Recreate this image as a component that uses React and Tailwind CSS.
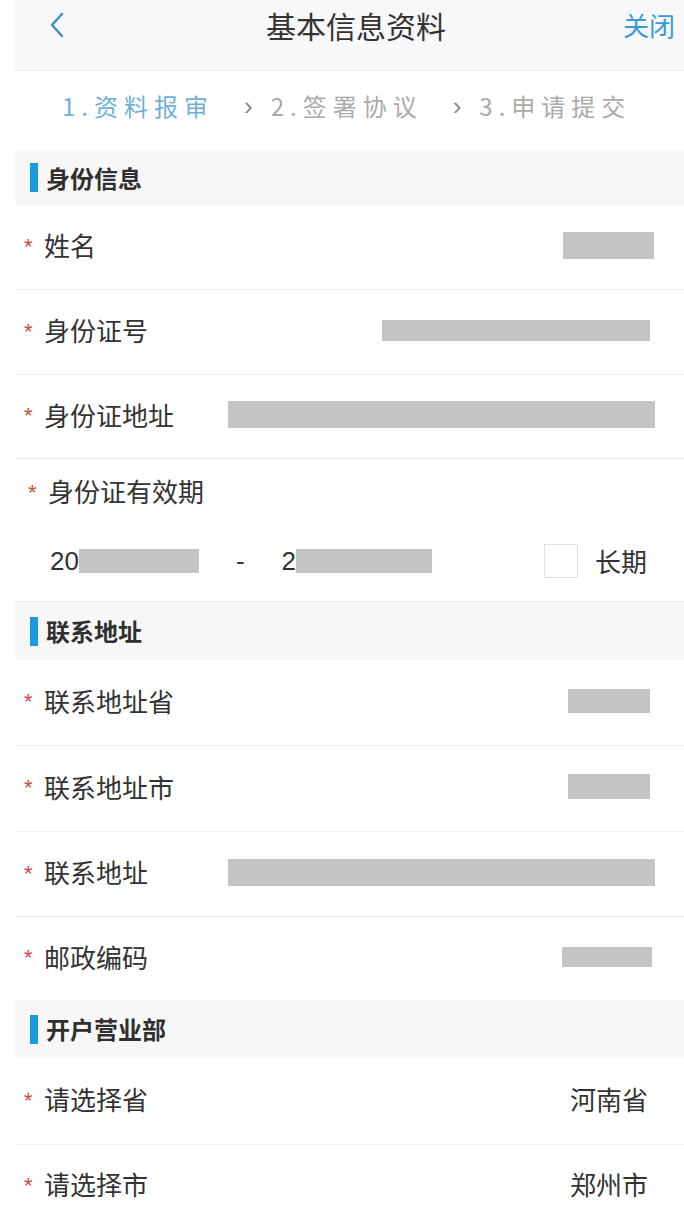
import React from "react";

const FONT = { fontFamily: '"Noto Sans CJK SC", "Noto Sans", sans-serif' };

function Star() {
  return (
    <span className="w-[20px] text-[22px] leading-none text-[#cf4a3f] mt-[3px]" style={{ fontFamily: '"Liberation Sans", sans-serif' }}>
      *
    </span>
  );
}

function Row({ label, h, children, border = true }) {
  return (
    <div className={`flex items-center pl-[9px] pb-[4px] ${border ? "border-b border-[#ececec]" : ""} ${h}`}>
      <Star />
      <span className="text-[26px] text-[#333333] leading-none">{label}</span>
      <div className="ml-auto flex items-center">{children}</div>
    </div>
  );
}

function Block({ w, h, mr }) {
  return <div className={`bg-[#c4c4c4] ${w} ${h} ${mr}`} />;
}

function Section({ title, h }) {
  return (
    <div className={`flex items-center bg-[#f7f7f7] ${h}`}>
      <div className="ml-[15px] w-[8px] h-[29px] bg-[#1a9be0]" />
      <span className="ml-[8px] text-[24px] font-bold text-[#2f2f2f] leading-none">{title}</span>
    </div>
  );
}

export default function App() {
  return (
    <div className="w-[684px] h-[1227px] bg-white overflow-hidden pl-[15px]" style={FONT}>
      {/* Header */}
      <div className="flex items-center h-[71px] pb-[20px] bg-[#f8f8f8] border-b border-[#efefef]">
        <svg className="ml-[34px]" width="16" height="26" viewBox="0 0 16 26" fill="none">
          <path d="M13 2 L3 13 L13 24" stroke="#3d8fc4" strokeWidth="2.4" strokeLinecap="round" strokeLinejoin="round" />
        </svg>
        <span className="ml-[201px] text-[30px] text-[#333333] leading-none">基本信息资料</span>
        <span className="ml-auto mr-[9px] text-[26px] text-[#3a9ad9] leading-none">关闭</span>
      </div>

      {/* Steps */}
      <div className="flex items-center h-[79px] pb-[10px] pl-[47px] text-[24px] leading-none">
        <span className="text-[#6fb0d8] tracking-[6px]">1.资料报审</span>
        <span className="ml-[30px] text-[#888888] text-[26px]" style={{ fontFamily: '"Liberation Sans", sans-serif' }}>›</span>
        <span className="ml-[18px] text-[#aaaaaa] tracking-[6px]">2.签署协议</span>
        <span className="ml-[30px] text-[#888888] text-[26px]" style={{ fontFamily: '"Liberation Sans", sans-serif' }}>›</span>
        <span className="ml-[18px] text-[#aaaaaa] tracking-[6px]">3.申请提交</span>
      </div>

      <Section title="身份信息" h="h-[55px]" />
      <Row label="姓名" h="h-[85px]">
        <Block w="w-[91px]" h="h-[27px]" mr="mr-[30px]" />
      </Row>
      <Row label="身份证号" h="h-[85px]">
        <Block w="w-[268px]" h="h-[21px]" mr="mr-[34px]" />
      </Row>
      <Row label="身份证地址" h="h-[84px]">
        <Block w="w-[427px]" h="h-[27px]" mr="mr-[29px]" />
      </Row>

      {/* Validity */}
      <div className="h-[143px] border-b border-[#ececec]">
        <div className="flex items-center h-[62px] pl-[13px] pt-[2px]">
          <Star />
          <span className="text-[26px] text-[#333333] leading-none">身份证有效期</span>
        </div>
        <div className="flex items-center h-[80px] pl-[35px]">
          <span className="text-[26px] text-[#333333] leading-none" style={{ fontFamily: '"Liberation Sans", sans-serif' }}>20</span>
          <div className="w-[120px] h-[24px] bg-[#c4c4c4]" />
          <span className="ml-[37px] text-[26px] text-[#333333] leading-none" style={{ fontFamily: '"Liberation Sans", sans-serif' }}>-</span>
          <span className="ml-[37px] text-[26px] text-[#333333] leading-none" style={{ fontFamily: '"Liberation Sans", sans-serif' }}>2</span>
          <div className="w-[136px] h-[24px] bg-[#c4c4c4]" />
          <div className="ml-auto w-[34px] h-[34px] border border-[#e2e2e2] bg-white" />
          <span className="ml-[17px] mr-[37px] text-[26px] text-[#333333] leading-none">长期</span>
        </div>
      </div>

      <Section title="联系地址" h="h-[58px]" />
      <Row label="联系地址省" h="h-[86px]">
        <Block w="w-[82px]" h="h-[24px]" mr="mr-[34px]" />
      </Row>
      <Row label="联系地址市" h="h-[86px]">
        <Block w="w-[82px]" h="h-[25px]" mr="mr-[34px]" />
      </Row>
      <Row label="联系地址" h="h-[85px]">
        <Block w="w-[427px]" h="h-[27px]" mr="mr-[29px]" />
      </Row>
      <Row label="邮政编码" h="h-[83px]" border={false}>
        <Block w="w-[90px]" h="h-[20px]" mr="mr-[32px]" />
      </Row>

      <Section title="开户营业部" h="h-[58px]" />
      <Row label="请选择省" h="h-[87px]">
        <span className="mr-[36px] text-[26px] text-[#333333] leading-none">河南省</span>
      </Row>
      <Row label="请选择市" h="h-[82px]" border={false}>
        <span className="mr-[36px] text-[26px] text-[#333333] leading-none">郑州市</span>
      </Row>
    </div>
  );
}
